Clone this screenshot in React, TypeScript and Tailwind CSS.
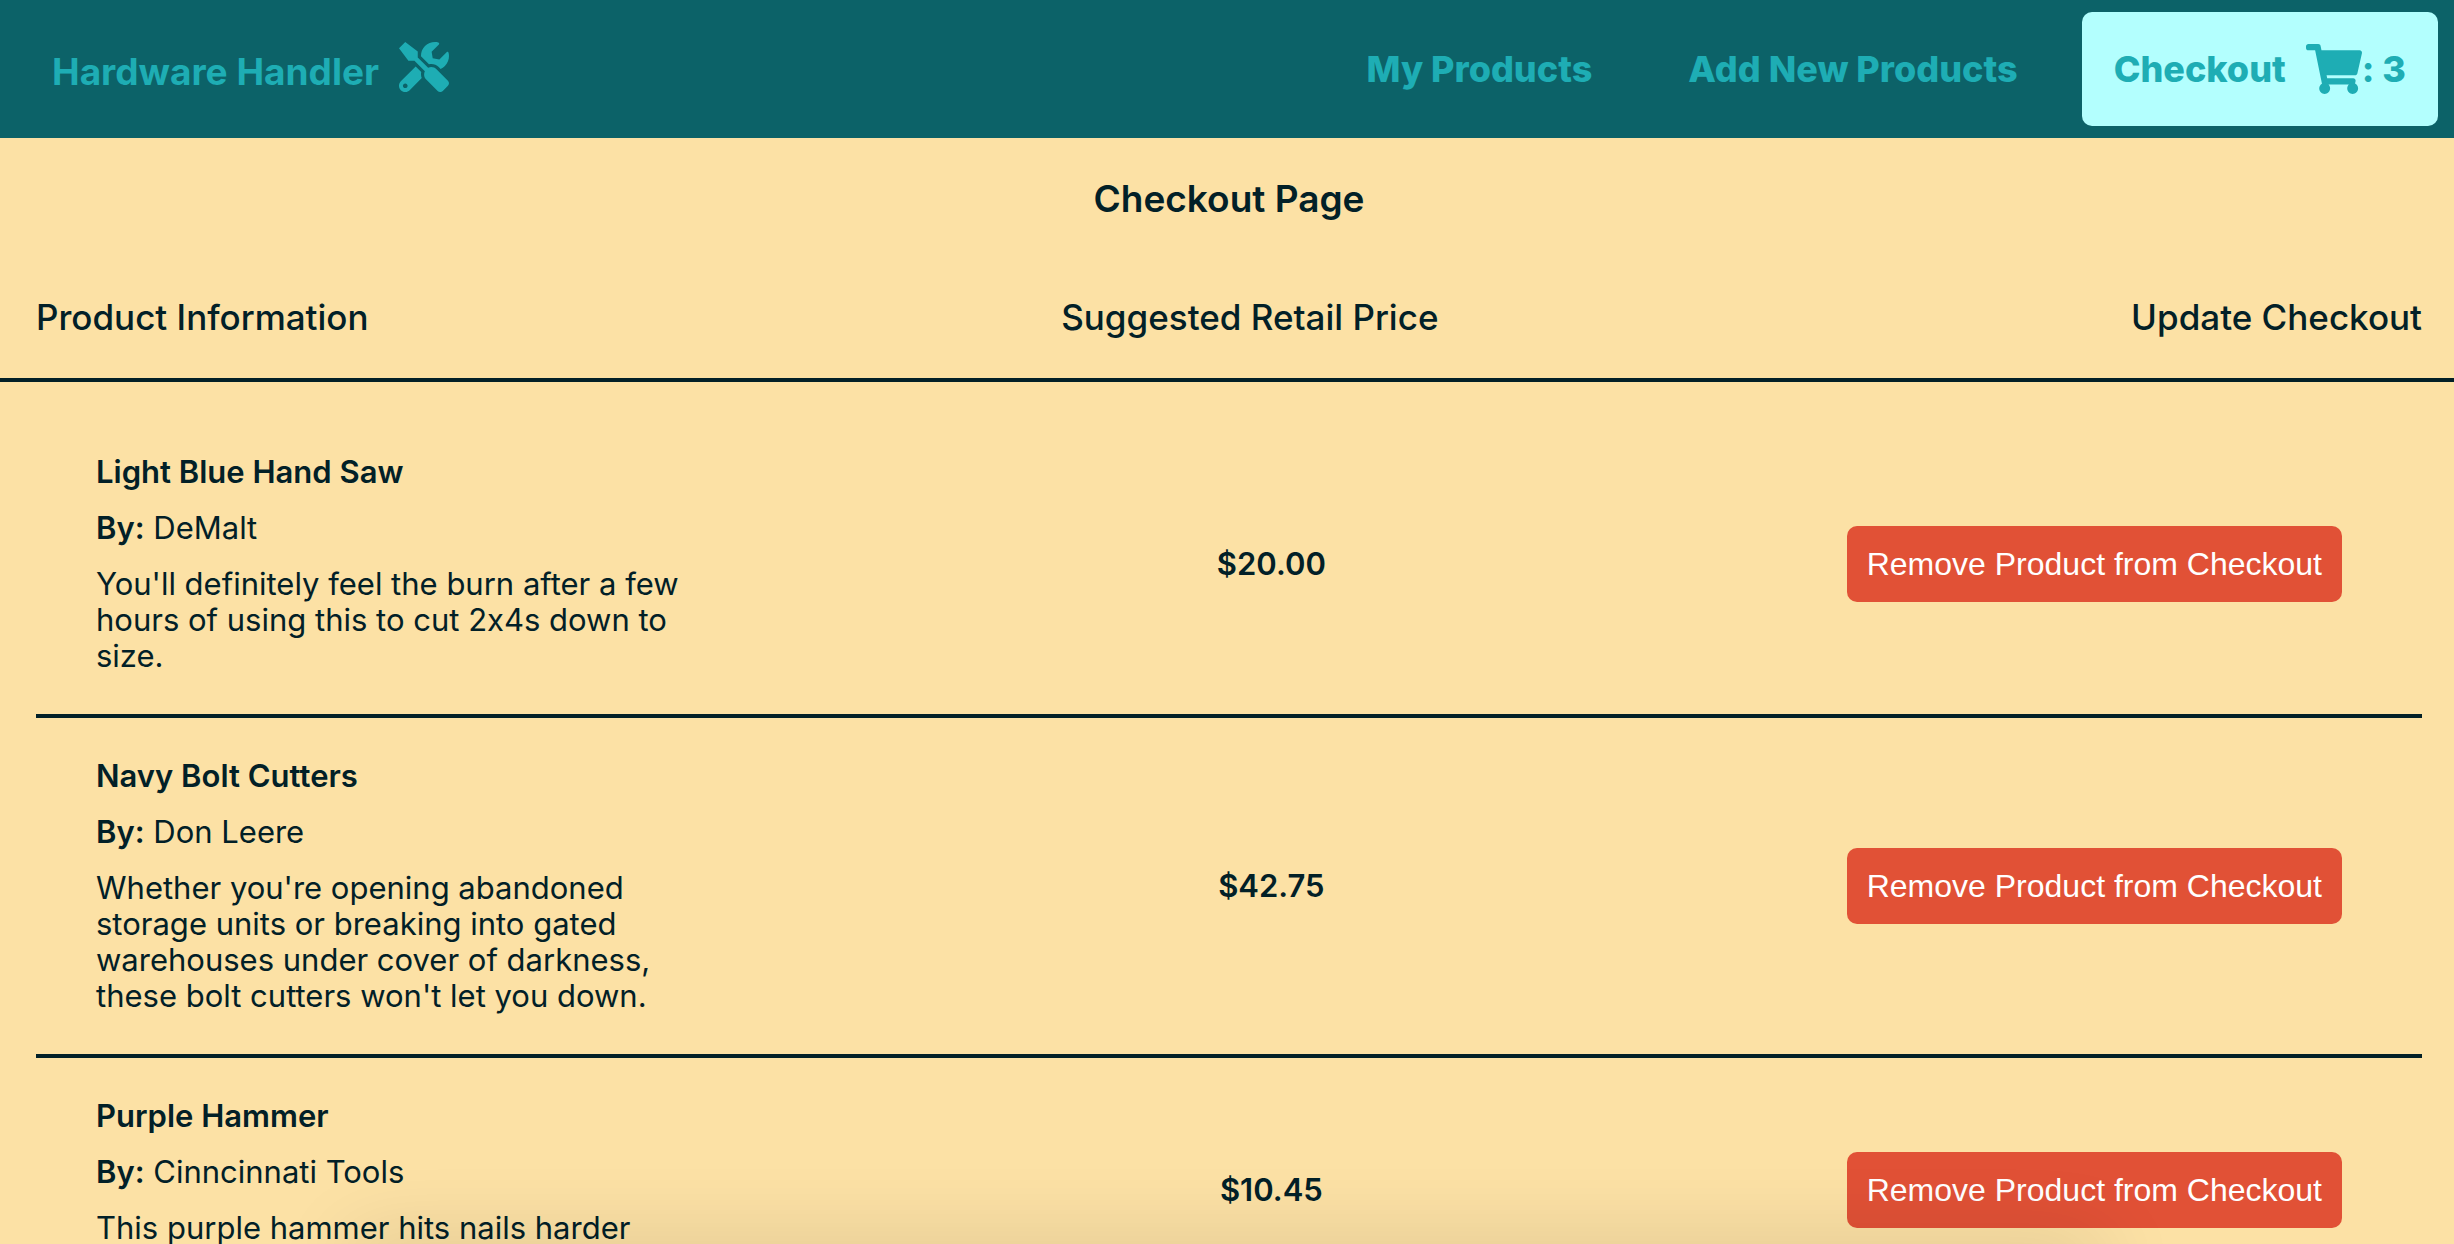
import { FaShoppingCart, FaTools } from "react-icons/fa";

type Product = {
  name: string;
  brand: string;
  description: string;
  price: string;
};

const products: Product[] = [
  {
    name: "Light Blue Hand Saw",
    brand: "DeMalt",
    description:
      "You'll definitely feel the burn after a few hours of using this to cut 2x4s down to size.",
    price: "$20.00",
  },
  {
    name: "Navy Bolt Cutters",
    brand: "Don Leere",
    description:
      "Whether you're opening abandoned storage units or breaking into gated warehouses under cover of darkness, these bolt cutters won't let you down.",
    price: "$42.75",
  },
  {
    name: "Purple Hammer",
    brand: "Cinncinnati Tools",
    description: "This purple hammer hits nails harder",
    price: "$10.45",
  },
];

function NavBar({ count }: { count: number }) {
  return (
    <header className="flex items-center justify-between bg-[#0c6268] py-3 pr-4 pl-[52px] leading-[50px] text-[#1eadb4]">
      <a
        href="#home"
        className="flex items-center gap-5 text-[37px] font-bold"
      >
        <span className="pt-1.5">Hardware Handler</span>
        <FaTools className="mb-1 size-[50px]" aria-hidden="true" />
      </a>
      <nav className="flex items-center gap-8 text-[36px] font-extrabold">
        <a href="#my-products" className="rounded-[10px] p-8">
          My Products
        </a>
        <a href="#add-products" className="rounded-[10px] p-8">
          Add New Products
        </a>
        <a
          href="#checkout"
          className="flex items-center rounded-[10px] bg-[#b3fffe] p-8"
        >
          Checkout
          <FaShoppingCart className="ml-5 h-[50px] w-14" aria-hidden="true" />
          <span>: {count}</span>
        </a>
      </nav>
    </header>
  );
}

function ProductRow({ product }: { product: Product }) {
  return (
    <li className="flex items-center justify-between border-b-4 border-[#022027] py-10 pr-20 pl-[60px]">
      <div className="flex w-[600px] flex-col gap-5">
        <h3 className="font-semibold">{product.name}</h3>
        <p>
          <strong className="font-semibold">By:</strong> {product.brand}
        </p>
        <p className="min-h-[72px]">{product.description}</p>
      </div>
      <p className="font-semibold">{product.price}</p>
      <button
        type="button"
        className="rounded-[10px] bg-[#e15136] p-5 font-['Liberation_Sans',sans-serif] text-[32px] text-white"
      >
        Remove Product from Checkout
      </button>
    </li>
  );
}

export default function App() {
  return (
    <div className="min-h-screen bg-[#fce1a5] font-[Inter,sans-serif] text-[31px] leading-9 text-[#022027] [font-feature-settings:'calt'_0]">
      <NavBar count={products.length} />
      <main>
        <h1 className="pt-[39px] pr-8 pl-9 text-center text-[37px] leading-[44px] font-semibold">
          Checkout Page
        </h1>
        <div className="mt-[74px] flex justify-between border-b-4 border-[#022027] pr-8 pb-[39px] pl-9 text-[35px] leading-[44px] font-medium">
          <h2>Product Information</h2>
          <h2>Suggested Retail Price</h2>
          <h2>Update Checkout</h2>
        </div>
        <ul className="mt-8 mr-8 ml-9">
          {products.map((product) => (
            <ProductRow key={product.name} product={product} />
          ))}
        </ul>
      </main>
      <div className="pointer-events-none fixed inset-x-[350px] -bottom-10 h-10 shadow-[0_0_80px_0_rgba(0,0,0,0.16)]" />
    </div>
  );
}
